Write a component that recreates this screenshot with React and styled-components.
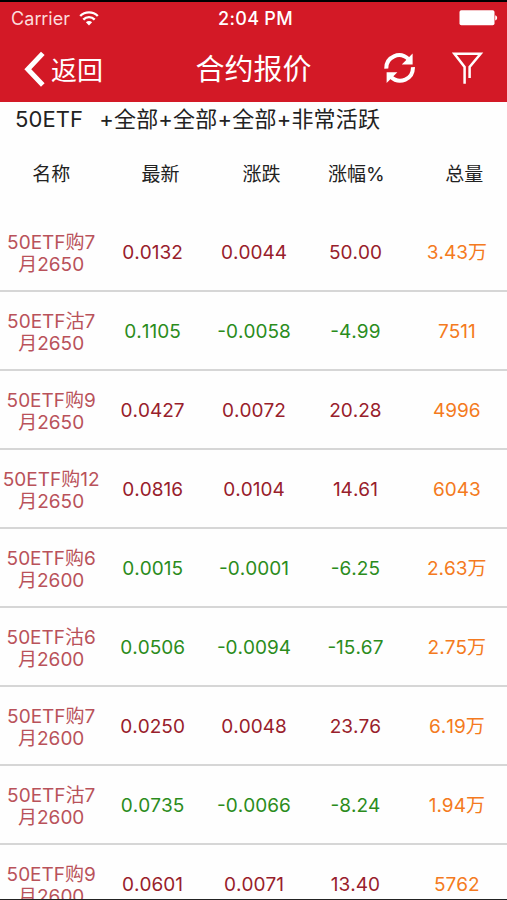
import React from 'react'
import styled, { createGlobalStyle } from 'styled-components'

const contracts = [
  { name: ['50ETF购7', '月2650'], last: '0.0132', change: '0.0044', percent: '50.00', volume: '3.43万' },
  { name: ['50ETF沽7', '月2650'], last: '0.1105', change: '-0.0058', percent: '-4.99', volume: '7511' },
  { name: ['50ETF购9', '月2650'], last: '0.0427', change: '0.0072', percent: '20.28', volume: '4996' },
  { name: ['50ETF购12', '月2650'], last: '0.0816', change: '0.0104', percent: '14.61', volume: '6043' },
  { name: ['50ETF购6', '月2600'], last: '0.0015', change: '-0.0001', percent: '-6.25', volume: '2.63万' },
  { name: ['50ETF沽6', '月2600'], last: '0.0506', change: '-0.0094', percent: '-15.67', volume: '2.75万' },
  { name: ['50ETF购7', '月2600'], last: '0.0250', change: '0.0048', percent: '23.76', volume: '6.19万' },
  { name: ['50ETF沽7', '月2600'], last: '0.0735', change: '-0.0066', percent: '-8.24', volume: '1.94万' },
  { name: ['50ETF购9', '月2600'], last: '0.0601', change: '0.0071', percent: '13.40', volume: '5762' },
]

export default function App() {
  return (
    <>
      <GlobalStyle />
      <Screen>
        <Header>
          <StatusBar>
            <Carrier>
              Carrier
              <WifiIcon />
            </Carrier>
            <Clock>2:04 PM</Clock>
            <BatteryIcon />
          </StatusBar>
          <NavBar>
            <BackButton>
              <BackIcon />
              <span>返回</span>
            </BackButton>
            <Title>合约报价</Title>
            <Actions>
              <RefreshIcon />
              <FilterIcon />
            </Actions>
          </NavBar>
        </Header>
        <FilterLine>
          <span>50ETF</span>
          <span>+全部+全部+全部+非常活跃</span>
        </FilterLine>
        <HeadRow>
          <HeadCell $indent={1}>名称</HeadCell>
          <HeadCell $indent={17}>最新</HeadCell>
          <HeadCell $indent={16}>涨跌</HeadCell>
          <HeadCell $indent={3}>涨幅%</HeadCell>
          <HeadCell $indent={16}>总量</HeadCell>
        </HeadRow>
        <List>
          {contracts.map((e, i) => {
            let color = e.change[0] === '-' ? '#2b8c1c' : '#98202b'
            return <Row key={i}>
                      <Name>
                        <span>{e.name[0]}</span>
                        <span>{e.name[1]}</span>
                      </Name>
                      <Value $color={color}>{e.last}</Value>
                      <Value $color={color}>{e.change}</Value>
                      <Value $color={color}>{e.percent}</Value>
                      <Value $color="#f47a20">{e.volume}</Value>
                  </Row>
          })}
        </List>
      </Screen>
    </>
  )
}

function WifiIcon() {
  return (
    <svg width="20" height="15" viewBox="0 0 20 15" fill="none" stroke="#fff" strokeWidth="2.4">
      <path d="M1.2 5C6 0.2 14 0.2 18.8 5" />
      <path d="M4.3 8.6C7.5 5.3 12.5 5.3 15.7 8.6" />
      <path d="M10 14.4L6.9 11.2C8.6 9.5 11.4 9.5 13.1 11.2Z" fill="#fff" stroke="none" />
    </svg>
  )
}

function BatteryIcon() {
  return (
    <svg width="39" height="16" viewBox="0 0 39 16" fill="#fff">
      <rect x="0.5" y="0.3" width="35" height="15" rx="1.8" />
      <path d="M36.2 5.2C38.8 6 38.8 9.6 36.2 10.4Z" />
    </svg>
  )
}

function BackIcon() {
  return (
    <svg width="21" height="36" viewBox="0 0 21 36" fill="none" stroke="#fff" strokeWidth="5">
      <path d="M18.8 2.4L3.8 18.2L18.8 34" />
    </svg>
  )
}

function RefreshIcon() {
  return (
    <svg width="32" height="32" viewBox="0 0 32 32">
      <g fill="none" stroke="#fff" strokeWidth="4">
        <path d="M2.3 16.6C2 4.9 15.6-1.4 24.6 7.3" />
        <path d="M28.9 15.2C29.4 27 15.6 33.4 6.6 24.5" />
      </g>
      <path d="M28.6 1.6V12.4H17.8Z" fill="#fff" />
      <path d="M2.6 31V20.2H13.4Z" fill="#fff" />
    </svg>
  )
}

function FilterIcon() {
  return (
    <svg width="32" height="32" viewBox="0 0 32 32" fill="none" stroke="#fff" strokeWidth="2.5">
      <path d="M12.6 31.8V15L2.4 1.8H28.6L17.6 15V26" />
    </svg>
  )
}

const GlobalStyle = createGlobalStyle`
  * {
    box-sizing: border-box;
  }
  body {
    margin: 0;
    background: #fefefe;
    font-family: Inter, "Noto Sans CJK SC", sans-serif;
    font-kerning: none;
  }
`

const Screen = styled.div`
  width: 507px;
  height: 900px;
  overflow: hidden;
  display: flex;
  flex-direction: column;
  background: #fefefe;
  border-top: 2px solid #000;
  border-bottom: 1px solid #222;
`

const Header = styled.header`
  flex: none;
  height: 100px;
  background: #d31926;
  color: #fff;
`

const StatusBar = styled.div`
  height: 32px;
  padding: 0 9px 0 11px;
  display: grid;
  grid-template-columns: 1fr auto 1fr;
  align-items: center;
  svg:last-child{
    justify-self: end;
  }
`

const Carrier = styled.div`
  display: flex;
  align-items: center;
  gap: 9px;
  font-size: 18px;
  letter-spacing: 0.1px;
  color: #fbdcdc;
`

const Clock = styled.div`
  padding-left: 2px;
  font-size: 18px;
  font-weight: 500;
  letter-spacing: 0.3px;
`

const NavBar = styled.div`
  height: 68px;
  padding: 0 23px 0 24px;
  display: grid;
  grid-template-columns: 1fr auto 1fr;
  align-items: center;
`

const BackButton = styled.div`
  display: flex;
  align-items: center;
  gap: 6px;
  font-size: 26px;
  line-height: 36px;
  padding-top: 2px;
  span{
    padding-top: 3px;
  }
`

const Title = styled.div`
  padding-top: 3px;
  padding-right: 1px;
  font-size: 29px;
  line-height: 36px;
`

const Actions = styled.div`
  display: flex;
  justify-content: flex-end;
  gap: 36px;
`

const FilterLine = styled.div`
  flex: none;
  height: 33px;
  padding-left: 15px;
  display: flex;
  gap: 16px;
  font-size: 22px;
  line-height: 34px;
  letter-spacing: 0.1px;
  color: #222;
  span:last-child{
    letter-spacing: 0.2px;
  }
`

const HeadRow = styled.div`
  flex: none;
  height: 78px;
  display: grid;
  grid-template-columns: repeat(5, 1fr);
`

const HeadCell = styled.div`
  padding-left: ${p => p.$indent || 0}px;
  text-align: center;
  font-size: 19px;
  line-height: 80px;
  color: #222;
`

const List = styled.div`
  flex: 1;
  min-height: 0;
  overflow: hidden;
`

const Row = styled.div`
  height: 79px;
  padding-top: 2px;
  display: grid;
  grid-template-columns: repeat(5, 1fr);
  align-items: center;
  border-bottom: 2px solid #d6d6d6;
`

const Name = styled.div`
  padding: 2px 0 0 1px;
  display: flex;
  flex-direction: column;
  align-items: center;
  white-space: nowrap;
  font-size: 19px;
  line-height: 22px;
  color: #b9525a;
`

const Value = styled.div`
  padding-left: 1px;
  text-align: center;
  font-size: 19px;
  line-height: 24px;
  color: ${p => p.$color};
`
